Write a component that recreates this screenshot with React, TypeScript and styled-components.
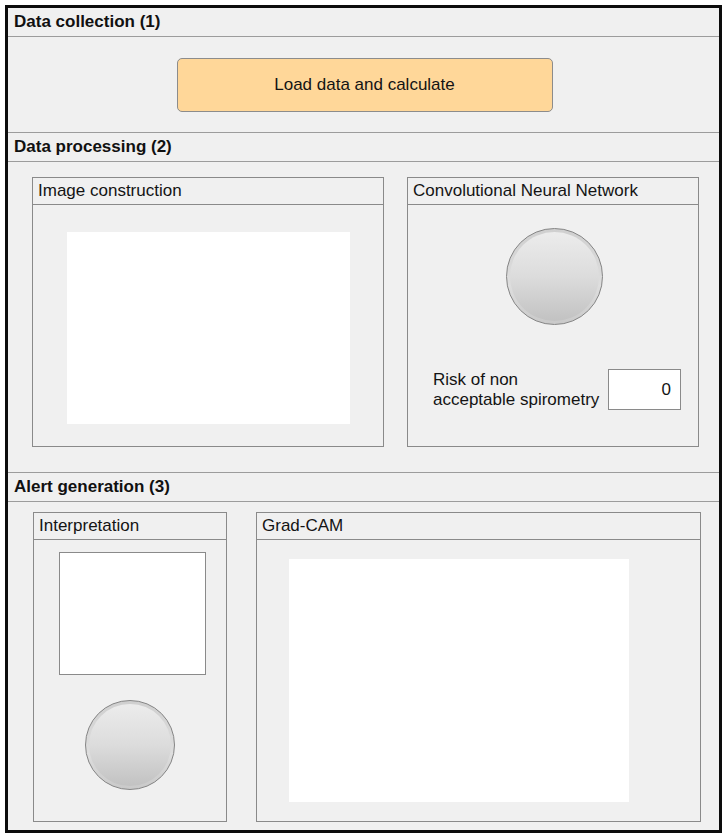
import React from 'react';
import styled, { createGlobalStyle } from 'styled-components';

const GlobalStyle = createGlobalStyle`
  * {
    box-sizing: border-box;
  }

  body {
    margin: 0;
    background: #ffffff;
    font-family: 'Liberation Sans', Arial, Helvetica, sans-serif;
    color: #111;
  }

  #root {
    padding: 5px;
  }
`;

const Figure = styled.div`
  width: 717px;
  height: 828px;
  border: 3px solid #0c0c0c;
  background: #f0f0f0;
  display: flex;
  flex-direction: column;
`;

const Section = styled.section<{ $first?: boolean; $grow?: boolean }>`
  display: flex;
  flex-direction: column;
  border-top: ${({ $first }) => ($first ? 'none' : '1px solid #9c9c9c')};
  flex: ${({ $grow }) => ($grow ? '1' : 'none')};
`;

const SectionHeader = styled.div`
  height: 29px;
  padding: 0 0 1px 6px;
  display: flex;
  align-items: center;
  border-bottom: 1px solid #9c9c9c;
  font-size: 17px;
  font-weight: 700;
`;

const SectionBody = styled.div<{ $height?: number; $pad: string; $gap?: number }>`
  display: flex;
  align-items: flex-start;
  height: ${({ $height }) => ($height ? `${$height}px` : 'auto')};
  flex: ${({ $height }) => ($height ? 'none' : '1')};
  padding: ${({ $pad }) => $pad};
  gap: ${({ $gap }) => $gap ?? 0}px;
`;

const CenteredBody = styled.div`
  height: 95px;
  display: flex;
  align-items: center;
  justify-content: center;
  padding-left: 2px;
`;

const ActionButton = styled.button`
  width: 376px;
  height: 54px;
  border: 1px solid #8c8c8c;
  border-radius: 5px;
  background: #ffd799;
  font-family: inherit;
  font-size: 17px;
  color: #141414;
  cursor: pointer;
`;

const Panel = styled.div<{ $width: number; $height: number }>`
  width: ${({ $width }) => $width}px;
  height: ${({ $height }) => $height}px;
  border: 1px solid #8a8a8a;
  display: flex;
  flex-direction: column;
`;

const PanelTitle = styled.div`
  height: 27px;
  padding: 0 0 0 5px;
  display: flex;
  align-items: center;
  border-bottom: 1px solid #8a8a8a;
  font-size: 17px;
  color: #141414;
`;

const PanelBody = styled.div<{ $pad: string; $align?: string }>`
  flex: 1;
  display: flex;
  flex-direction: column;
  align-items: ${({ $align }) => $align ?? 'center'};
  padding: ${({ $pad }) => $pad};
`;

const Axes = styled.div<{ $width: number; $height: number; $framed?: boolean }>`
  width: ${({ $width }) => $width}px;
  height: ${({ $height }) => $height}px;
  background: #ffffff;
  border: ${({ $framed }) => ($framed ? '1px solid #8a8a8a' : 'none')};
  flex: none;
`;

const Lamp = styled.div<{ $size: number }>`
  width: ${({ $size }) => $size}px;
  height: ${({ $size }) => $size}px;
  flex: none;
  border-radius: 50%;
  border: 1.5px solid #858585;
  padding: 3px;
  background: linear-gradient(180deg, #cfcfcf 0%, #dedede 60%, #c9c9c9 100%);

  &::after {
    content: '';
    display: block;
    width: 100%;
    height: 100%;
    border-radius: 50%;
    background: linear-gradient(180deg, #ececec 0%, #dcdcdc 50%, #c2c2c2 100%);
  }
`;

const LampSlot = styled.div`
  display: flex;
  justify-content: center;
  padding-left: 3px;
`;

const LampGap = styled.div`
  margin-top: 25px;
  margin-left: -4px;
`;

const RiskRow = styled.div`
  margin-top: 44px;
  padding-left: 25px;
  display: flex;
  align-items: center;
  gap: 7px;
`;

const RiskLabel = styled.div`
  font-size: 17px;
  line-height: 20px;
  color: #141414;
  width: 168px;
  white-space: nowrap;
  padding-top: 1px;
`;

const NumberField = styled.div`
  width: 73px;
  height: 41px;
  background: #ffffff;
  border: 1px solid #8a8a8a;
  display: flex;
  align-items: center;
  justify-content: flex-end;
  padding-right: 9px;
  font-size: 17px;
  color: #141414;
`;

export default function App() {
  return (
    <>
      <GlobalStyle />
      <Figure>
        <Section $first>
          <SectionHeader>Data collection (1)</SectionHeader>
          <CenteredBody>
            <ActionButton>Load data and calculate</ActionButton>
          </CenteredBody>
        </Section>

        <Section>
          <SectionHeader>Data processing (2)</SectionHeader>
          <SectionBody $height={310} $pad="15px 0 0 24px" $gap={23}>
            <Panel $width={352} $height={270}>
              <PanelTitle>Image construction</PanelTitle>
              <PanelBody $pad="27px 0 0 0">
                <Axes $width={283} $height={192} />
              </PanelBody>
            </Panel>
            <Panel $width={292} $height={270}>
              <PanelTitle>Convolutional Neural Network</PanelTitle>
              <PanelBody $pad="23px 0 0 0" $align="stretch">
                <LampSlot>
                  <Lamp $size={97} />
                </LampSlot>
                <RiskRow>
                  <RiskLabel>
                    Risk of non
                    <br />
                    acceptable spirometry
                  </RiskLabel>
                  <NumberField>0</NumberField>
                </RiskRow>
              </PanelBody>
            </Panel>
          </SectionBody>
        </Section>

        <Section $grow>
          <SectionHeader>Alert generation (3)</SectionHeader>
          <SectionBody $pad="10px 0 0 25px" $gap={29}>
            <Panel $width={194} $height={310}>
              <PanelTitle>Interpretation</PanelTitle>
              <PanelBody $pad="12px 0 0 4px">
                <Axes $width={147} $height={123} $framed />
                <LampGap>
                  <Lamp $size={90} />
                </LampGap>
              </PanelBody>
            </Panel>
            <Panel $width={445} $height={310}>
              <PanelTitle>Grad-CAM</PanelTitle>
              <PanelBody $pad="19px 0 0 32px" $align="flex-start">
                <Axes $width={340} $height={243} />
              </PanelBody>
            </Panel>
          </SectionBody>
        </Section>
      </Figure>
    </>
  );
}
